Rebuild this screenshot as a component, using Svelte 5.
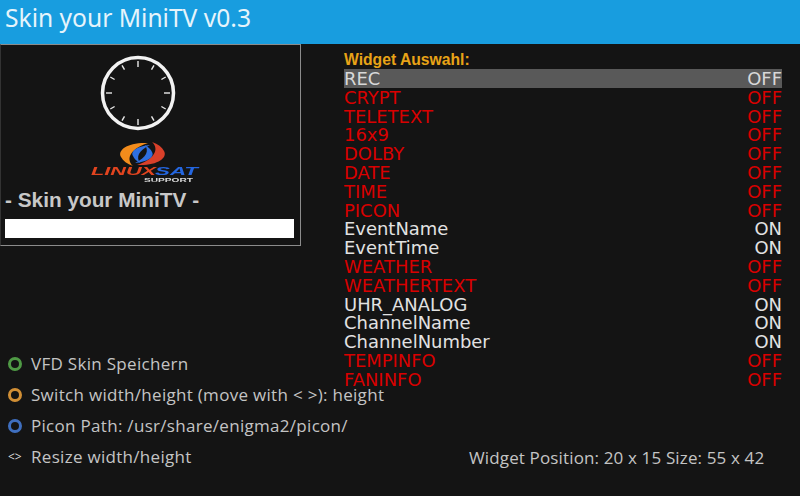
<script lang="ts">
	const widgets = [
		['REC', false], ['CRYPT', false], ['TELETEXT', false], ['16x9', false], ['DOLBY', false],
		['DATE', false], ['TIME', false], ['PICON', false], ['EventName', true], ['EventTime', true],
		['WEATHER', false], ['WEATHERTEXT', false], ['UHR_ANALOG', true], ['ChannelName', true],
		['ChannelNumber', true], ['TEMPINFO', false], ['FANINFO', false]
	];
	const ticks = Array.from({ length: 12 }, (_, i) => i * 30);
	const legend = [
		{ color: '#4f9a45', text: 'VFD Skin Speichern' },
		{ color: '#d18f35', text: 'Switch width/height (move with < >): height' },
		{ color: '#3f6fbf', text: 'Picon Path: /usr/share/enigma2/picon/' }
	];
</script>

<div class="screen">
	<header class="title">Skin your MiniTV v0.3</header>
	<div class="body">
		<div class="left">
			<section class="preview">
				<svg class="clock" width="76" height="76" viewBox="0 0 76 76">
					<circle cx="38" cy="38" r="35.5" fill="none" stroke="#f2f2f2" stroke-width="3.5" />
					{#each ticks as a}
						<line x1="38" y1="6" x2="38" y2={a % 90 === 0 ? 12 : 11} stroke="#e8e8e8" stroke-width="1.4" transform="rotate({a} 38 38)" />
					{/each}
				</svg>
				<svg class="logo" width="110" height="40" viewBox="0 0 110 40">
					<path d="M58 1 C38 0 27 8 31 15 C33 19 37 22 43 24 C37 19 37 8 58 1 Z" fill="#f28c1c" />
					<path d="M60 3 C48 4 40 9 43 14 C44 17 47 19 50 21 C46 15 48 9 60 3 Z" fill="#2f6fe0" />
					<path d="M47 23 C67 24 78 16 74 9 C72 5 68 2 62 0 C68 5 68 16 47 23 Z" fill="#d9402a" />
					<path d="M45 21 C57 20 65 15 62 10 C61 7 58 5 55 3 C59 9 57 15 45 21 Z" fill="#2f6fe0" />
					<text class="logo-text" x="1" y="33" fill="#e2441f" textLength="65" lengthAdjust="spacingAndGlyphs">LINUX</text>
					<text class="logo-text" x="65" y="33" fill="#2466e0" textLength="43" lengthAdjust="spacingAndGlyphs">SAT</text>
					<text class="logo-sub" x="54" y="39.5" fill="#d8d8d8" textLength="49" lengthAdjust="spacingAndGlyphs">SUPPORT</text>
				</svg>
				<div class="caption">- Skin your MiniTV -</div>
				<div class="bar"></div>
			</section>
			<ul class="legend">
				{#each legend as item}
					<li><span class="dot" style="border-color: {item.color}"></span>{item.text}</li>
				{/each}
				<li><span class="arrows">&lt;&gt;</span>Resize width/height</li>
			</ul>
		</div>
		<div class="right">
			<h2>Widget Auswahl:</h2>
			<ul class="widgets">
				{#each widgets as [name, on], i}
					<li class:on class:selected={i === 0}><span>{name}</span><span>{on ? 'ON' : 'OFF'}</span></li>
				{/each}
			</ul>
			<div class="position">Widget Position: 20 x 15 Size: 55 x 42</div>
		</div>
	</div>
</div>

<style>
	:global(body) {
		margin: 0;
		background: #141414;
	}

	.screen {
		width: 800px;
		height: 496px;
		overflow: hidden;
		display: flex;
		flex-direction: column;
		background: #141414;
		font-family: 'Open Sans', sans-serif;
	}

	.title {
		height: 44px;
		flex: none;
		box-sizing: border-box;
		padding: 0 0 0 5px;
		background: #189ddf;
		color: #e6f4fb;
		font-family: 'Noto Sans', sans-serif;
		font-size: 24.6px;
		line-height: 35px;
	}

	.body {
		display: flex;
		flex: 1;
	}

	.left {
		width: 344px;
		flex: none;
		display: flex;
		flex-direction: column;
	}

	.preview {
		width: 301px;
		height: 202px;
		box-sizing: border-box;
		border: 1px solid #8c8c8c;
		border-left-color: #333;
		display: flex;
		flex-direction: column;
		align-items: flex-start;
	}

	.clock {
		margin: 10px 0 0 99px;
		filter: blur(0.3px);
	}

	.logo {
		margin: 11px 0 0 89px;
		filter: blur(0.35px);
	}

	.logo-text {
		font: italic bold 10px 'Liberation Sans', sans-serif;
	}

	.logo-sub {
		font: bold 5px 'Liberation Sans', sans-serif;
	}

	.caption {
		margin: 5px 0 0 4px;
		color: #c8c8c8;
		font: bold 20.8px/26px 'Liberation Sans', sans-serif;
	}

	.bar {
		margin: 6px 0 0 4px;
		width: 289px;
		height: 19px;
		background: #fff;
	}

	.legend {
		list-style: none;
		margin: 102px 0 0;
		padding: 0;
		white-space: nowrap;
		color: #c4c4c4;
		font-size: 17px;
		letter-spacing: 0.3px;
	}

	.legend li {
		height: 31px;
		line-height: 31px;
		display: flex;
		align-items: center;
	}

	.dot {
		flex: none;
		width: 14px;
		height: 14px;
		box-sizing: border-box;
		margin: 0 9px 0 8px;
		border: 3px solid;
		border-radius: 50%;
	}

	.arrows {
		flex: none;
		width: 31px;
		padding-left: 8px;
		box-sizing: border-box;
		font-size: 12px;
		letter-spacing: 0;
		color: #ddd;
	}

	.right {
		flex: 1;
		padding-right: 18px;
		display: flex;
		flex-direction: column;
	}

	h2 {
		margin: 7px 0 0;
		color: #e8a317;
		font: bold 15.7px/17px 'Liberation Sans', sans-serif;
	}

	.widgets {
		list-style: none;
		margin: 1px 0 0;
		padding: 0;
		font-family: 'DejaVu Sans', sans-serif;
		font-size: 17.95px;
	}

	.widgets li {
		height: 18.8px;
		line-height: 20px;
		display: flex;
		justify-content: space-between;
		color: #d90000;
	}

	.widgets li.on {
		color: #e2e2e2;
	}

	.widgets li.selected {
		background: #595959;
		color: #d8d8d8;
	}

	.position {
		margin: 53px 0 0 125px;
		color: #c4c4c4;
		font-size: 17px;
		letter-spacing: 0.14px;
		line-height: 31px;
		white-space: nowrap;
	}
</style>
